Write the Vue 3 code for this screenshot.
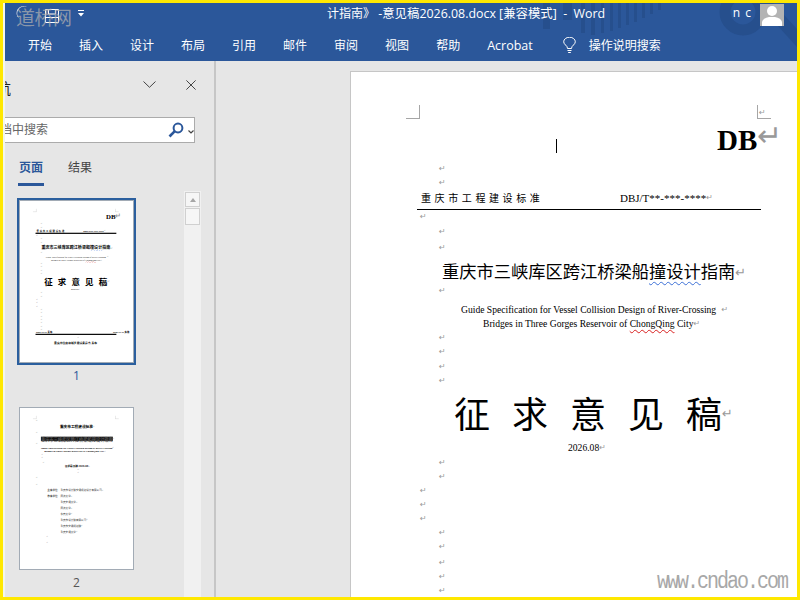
<script setup>
const tabs = ['开始', '插入', '设计', '布局', '引用', '邮件', '审阅', '视图', '帮助']

function layout(list, ox, oy) {
  let bottom = 0
  return list.map((r) => {
    const h = r.h || 14
    const top = r.y - oy - h / 2
    const row = {
      parts: r.p || [],
      mark: r.m === undefined ? true : r.m,
      style: { marginTop: top - bottom + 'px', marginLeft: r.x - ox + 'px', height: h + 'px' }
    }
    bottom = top + h
    return row
  })
}

const sp = (x, ys) => ys.map((y) => ({ x, y }))

const firstPage = layout(
  [
    { x: 717, y: 140, h: 28, p: [{ t: 'DB', c: 'db' }], m: 'big' },
    ...sp(439, [169, 183]),
    {
      x: 421,
      y: 198,
      p: [
        { t: '重庆市工程建设标准', c: 'std' },
        { t: 'DBJ/T**-***-****', c: 'code' }
      ]
    },
    { x: 417, y: 209, h: 2, p: [{ c: 'rule' }], m: false },
    { x: 420, y: 217 },
    ...sp(439, [232, 248]),
    {
      x: 442,
      y: 271,
      h: 22,
      p: [
        { t: '重庆市三峡库区跨江桥梁船', c: 'title' },
        { t: '撞设计', c: 'title blue' },
        { t: '指南', c: 'title' }
      ],
      m: 'mid'
    },
    { x: 439, y: 291 },
    { x: 461, y: 310, p: [{ t: 'Guide Specification for Vessel Collision Design of River-Crossing ', c: 'en gapr' }] },
    {
      x: 483,
      y: 324,
      p: [
        { t: 'Bridges in Three Gorges Reservoir of ', c: 'en' },
        { t: 'ChongQing', c: 'en red' },
        { t: ' City', c: 'en' }
      ]
    },
    ...sp(439, [338, 352, 367, 381]),
    {
      x: 454,
      y: 412,
      h: 44,
      p: [
        { t: '征求意见', c: 'big' },
        { t: '稿', c: 'big last' }
      ],
      m: 'mid'
    },
    { x: 568, y: 448, p: [{ t: '2026.08', c: 'en' }] },
    ...sp(439, [463, 477]),
    ...sp(420, [491, 505, 519]),
    ...sp(439, [533, 547, 563, 577, 591, 605, 619]),
    {
      x: 419,
      y: 632,
      p: [
        { t: '2026-**-** 发布', c: 'foot' },
        { t: '2026-**-** 实施', c: 'foot' }
      ],
      m: false
    },
    { x: 417, y: 639, h: 2, p: [{ c: 'rule' }], m: false },
    { x: 596, y: 653 },
    { x: 496, y: 675, p: [{ t: '重庆市住房和城乡建设委员会 发布', c: 'org' }], m: false }
  ],
  351,
  72
)

const secondPage = layout(
  [
    { x: 68, y: 55 },
    { x: 170, y: 77, h: 20, p: [{ t: '重庆市工程建设标准', c: 'h2' }] },
    { x: 68, y: 105 },
    { x: 89, y: 131, h: 22, p: [{ t: '重庆市三峡库区跨江桥梁船撞设计指南', c: 'h1' }] },
    { x: 68, y: 153 },
    { x: 89, y: 170, p: [{ t: 'Guide Specification for Vessel Collision Design of River-Crossing', c: 'en bold' }] },
    { x: 103, y: 184, p: [{ t: 'Bridges in Three Gorges Reservoir of ChongQing City', c: 'en bold' }] },
    { x: 91, y: 199 },
    { x: 91, y: 212 },
    { x: 97, y: 232 },
    { x: 191, y: 247, p: [{ t: '征求意见稿 2026.08', c: 'h3' }] },
    { x: 245, y: 262 },
    { x: 245, y: 275 },
    { x: 68, y: 296 },
    { x: 68, y: 325 },
    {
      x: 116,
      y: 350,
      p: [
        { t: '主编单位:', c: 'lab' },
        { t: '重庆市设计院交通规划设计有限公司', c: 'org2' }
      ]
    },
    {
      x: 116,
      y: 375,
      p: [
        { t: '参编单位:', c: 'lab' },
        { t: '同济大学', c: 'org2' }
      ]
    },
    { x: 172, y: 401, p: [{ t: '重庆交通大学', c: 'org2' }] },
    { x: 172, y: 426, p: [{ t: '同济大学', c: 'org2' }] },
    { x: 172, y: 451, p: [{ t: '东南大学', c: 'org2' }] },
    { x: 172, y: 476, p: [{ t: '重庆市设计院有限公司', c: 'org2' }] },
    { x: 172, y: 502, p: [{ t: '重庆市交通规划院', c: 'org2' }] },
    { x: 172, y: 527, p: [{ t: '重庆交通大学', c: 'org2' }] },
    { x: 113, y: 548 },
    { x: 113, y: 573 }
  ],
  0,
  0
)

const thumbs = [
  { n: '1', rows: firstPage, on: true },
  { n: '2', rows: secondPage, on: false }
]
</script>

<template>
  <div class="screen">
    <div class="strip"></div>
    <div class="window">
      <header class="ribbon">
        <svg class="decor" width="792" height="58" viewBox="0 0 792 58">
          <g fill="#264f8d">
            <rect x="538" y="0" width="7" height="26" />
            <rect x="558" y="0" width="9" height="17" />
            <rect x="576" y="0" width="4" height="30" />
            <rect x="586" y="0" width="4" height="32" />
            <rect x="596" y="0" width="3" height="30" />
            <rect x="605" y="0" width="3" height="28" />
            <rect x="613" y="0" width="3" height="25" />
            <rect x="621" y="0" width="3" height="22" />
            <rect x="629" y="0" width="3" height="19" />
            <rect x="637" y="0" width="3" height="15" />
            <rect x="645" y="0" width="3" height="11" />
            <rect x="653" y="0" width="3" height="7" />
          </g>
          <circle cx="738" cy="9" r="18" fill="none" stroke="#264f8d" stroke-width="11" />
          <path d="M752 0 L792 44 V26 L768 0 Z" fill="#264f8d" />
        </svg>
        <div class="titlebar">
          <svg class="save" width="14" height="14" viewBox="0 0 14 14">
            <path d="M.5.5H13.5V13.5H.5Z M3.5.5V5H10.5V.5 M.5 8.5H13.5" fill="none" stroke="#fff" />
          </svg>
          <svg class="qat" width="6" height="7" viewBox="0 0 6 7">
            <path d="M0 0H6V1H0Z M0 3H6L3 6.5Z" fill="#fff" />
          </svg>
          <div class="doc-title"><span class="zh">计指南》</span> -意见稿2026.08.docx [兼容模式]&nbsp; -&nbsp; Word</div>
          <div class="user">n c</div>
          <svg class="avatar" width="24" height="22" viewBox="0 0 24 22">
            <rect width="24" height="22" fill="#b3b3b3" />
            <circle cx="12" cy="7" r="5" fill="#fff" />
            <path d="M2 22V18Q3 14 9 13H15Q21 14 22 18V22Z" fill="#fff" />
          </svg>
        </div>
        <nav class="tabs">
          <span v-for="t in tabs" :key="t" class="tab">{{ t }}</span>
          <span class="tab latin">Acrobat</span>
          <span class="tell">
            <svg width="13" height="17" viewBox="0 0 13 17">
              <path d="M4.5 11.5Q4.5 9.5 2.5 8Q.7 6.3.7 4.8A5.8 4.6 0 0 1 12.3 4.8Q12.3 6.3 10.5 8Q8.5 9.5 8.5 11.5Z M4.5 13.5H8.5 M5.2 15.5H7.8" fill="none" stroke="#fff" />
            </svg>
            <span>操作说明搜索</span>
          </span>
        </nav>
        <div class="mark-wm">
          <svg width="14" height="16" viewBox="0 0 14 16">
            <path d="M11 1A7 7 0 0 0 4 13A6 6 0 0 1 11 1Z" fill="#d9dde6" />
          </svg>
          <span>道桥网</span>
        </div>
      </header>

      <main class="work">
        <aside class="nav">
          <div class="nav-head">
            <span class="nav-title">导航</span>
            <svg class="chev" width="13" height="7" viewBox="0 0 13 7">
              <path d="M.5.5L6.5 6.3L12.5.5" fill="none" stroke="#444" />
            </svg>
            <svg class="shut" width="10" height="10" viewBox="0 0 10 10">
              <path d="M.4.4L9.6 9.6M9.6.4L.4 9.6" fill="none" stroke="#444" />
            </svg>
          </div>
          <div class="search">
            <span class="hint">在文档中搜索</span>
            <svg width="16" height="16" viewBox="0 0 16 16">
              <circle cx="10" cy="6" r="4.4" fill="none" stroke="#2b579a" stroke-width="2" />
              <path d="M6.8 9.2L1.5 14.5" stroke="#2b579a" stroke-width="2.6" />
            </svg>
            <svg class="drop" width="6" height="4" viewBox="0 0 6 4">
              <path d="M.5.5L3 3L5.5.5" fill="none" stroke="#444" stroke-width="1.2" />
            </svg>
          </div>
          <div class="nav-tabs">
            <span class="nt active">页面</span>
            <span class="nt">结果</span>
          </div>
          <div class="nav-body">
            <div class="thumbs">
              <div v-for="p in thumbs" :key="p.n" class="thumb-item">
                <div :class="['thumb-frame', { on: p.on }]">
                  <div class="thumb">
                    <div class="sheet mini">
                      <i class="crop tl"></i>
                      <i class="crop tr"></i>
                      <div v-for="(r, i) in p.rows" :key="i" class="row" :style="r.style">
                        <span v-for="(q, k) in r.parts" :key="k" :class="q.c">{{ q.t }}</span>
                        <span v-if="r.mark" :class="['rt', r.mark]">↵</span>
                      </div>
                    </div>
                  </div>
                </div>
                <div :class="['num', { on: p.on }]">{{ p.n }}</div>
              </div>
            </div>
            <div class="scrollbar">
              <div class="sb-btn"><i></i></div>
              <div class="sb-thumb"></div>
            </div>
          </div>
        </aside>
        <section class="docarea">
          <div class="sheet">
            <i class="crop tl"></i>
            <i class="crop tr"><b class="rt tiny">↵</b></i>
            <i class="caret"></i>
            <div v-for="(r, i) in firstPage" :key="i" class="row" :style="r.style">
              <span v-for="(q, k) in r.parts" :key="k" :class="q.c">{{ q.t }}</span>
              <span v-if="r.mark" :class="['rt', r.mark]">↵</span>
            </div>
          </div>
          <div class="site">www.cndao.com</div>
        </section>
      </main>
    </div>
  </div>
</template>

<style>
html, body { margin: 0; padding: 0; background: #fff; }
</style>

<style scoped>
.screen {
  width: 800px;
  height: 600px;
  box-sizing: border-box;
  border: 3px solid #ffe800;
  display: flex;
  overflow: hidden;
  background: #fff;
  font-family: "Open Sans", "Noto Sans CJK SC", sans-serif;
}
.strip { width: 2px; flex: none; background: #f4f6ea; }
.window { flex: 1; min-width: 0; display: flex; flex-direction: column; }

.ribbon { position: relative; height: 58px; flex: none; background: #2b579a; color: #fff; overflow: hidden; }
.decor { position: absolute; left: 0; top: 0; }
.titlebar { position: relative; height: 26px; display: flex; align-items: center; }
.save { margin-left: 40px; margin-top: -1px; }
.qat { margin-left: 19px; margin-top: -5px; }
.doc-title { margin-left: 243px; flex: 1; font-size: 12.4px; white-space: nowrap; margin-top: -6px; }
.doc-title .zh { font-size: 12px; }
.user { font-size: 12px; letter-spacing: 1px; margin-right: 8px; margin-top: -7px; }
.avatar { margin-right: 13px; margin-top: -3px; }
.tabs { position: relative; height: 32px; display: flex; align-items: center; gap: 27px; padding-left: 23px; font-size: 12px; }
.tab { white-space: nowrap; }
.latin { font-size: 12.5px; }
.tell { display: flex; align-items: center; gap: 13px; margin-left: 3px; }
.mark-wm { position: absolute; left: 11px; top: 2px; display: flex; align-items: center; }
.mark-wm svg { position: absolute; left: 0; top: 1px; }
.mark-wm span { font-size: 19px; line-height: 26px; letter-spacing: -.5px; color: rgba(176, 176, 176, .72); }

.work { flex: 1; min-height: 0; display: flex; background: #e6e6e6; }
.nav { width: 209px; flex: none; display: flex; flex-direction: column; overflow: hidden; border-right: 2px solid #c6c6c6; box-sizing: content-box; color: #444; }
.nav-head { height: 56px; flex: none; display: flex; align-items: flex-start; }
.nav-title { margin: 17px 0 0 -24px; flex: none; width: 30px; font-size: 15px; line-height: 20px; color: #222; white-space: nowrap; direction: rtl; text-align: left; overflow: hidden; }
.chev { margin: 20px 0 0 132px; flex: none; }
.shut { margin: 19px 0 0 30px; flex: none; }
.search { flex: none; height: 26px; width: 224px; box-sizing: border-box; margin-left: -34px; border: 1px solid #ababab; background: #fff; display: flex; align-items: center; padding-left: 4px; }
.hint { font-size: 12px; color: #666; width: 192px; flex: none; white-space: nowrap; margin-top: -2px; }
.drop { margin-left: 4px; margin-top: 3px; }
.nav-tabs { flex: none; display: flex; gap: 23px; margin: 15px 0 0 13px; }
.nt { padding: 0 1px 5px; border-bottom: 3px solid transparent; font-size: 12px; line-height: 20px; color: #444; }
.nt.active { color: #2b579a; font-weight: 700; border-bottom-color: #2b579a; }
.nav-body { flex: 1; min-height: 0; margin-top: 5px; display: flex; }
.thumbs { width: 143px; margin-right: 36px; padding-top: 7px; display: flex; flex-direction: column; align-items: center; gap: 21px; flex: none; }
.thumb-item { display: flex; flex-direction: column; align-items: center; }
.thumb-frame { padding: 0; border: 2px solid transparent; }
.thumb-frame.on { border-color: #2b5f9e; }
.thumb { width: 113px; height: 161px; border: 1px solid #a2abb5; background: #fff; overflow: hidden; }
.num { margin-top: 3px; font-size: 12px; line-height: 16px; color: #555; }
.num.on { color: #2b579a; }
.scrollbar { width: 17px; flex: none; background: #f1f1f1; padding-top: 1px; display: flex; flex-direction: column; align-items: center; gap: 1px; }
.sb-btn, .sb-thumb { width: 15px; box-sizing: border-box; border: 1px solid #d0d0d0; background: #f6f6f6; }
.sb-btn { height: 15px; display: flex; align-items: center; justify-content: center; }
.sb-btn i { width: 0; height: 0; border: 3.5px solid transparent; border-top: 0; border-bottom: 4px solid #a6a6a6; }
.sb-thumb { height: 17px; }

.docarea { position: relative; flex: 1; min-width: 0; overflow: hidden; padding: 11px 0 0 135px; }
.sheet { position: relative; width: 481px; height: 680px; background: #fff; box-shadow: 0 0 0 1px #c6c6c6; font-family: "Liberation Serif", "Noto Sans CJK SC", serif; color: #000; display: flow-root; }
.sheet.mini { transform: scale(.235); transform-origin: 0 0; box-shadow: none; }
.row { display: flex; align-items: center; white-space: nowrap; line-height: 1; }
.rt { font-family: "DejaVu Sans", sans-serif; font-size: 8px; color: #999; line-height: 1; font-weight: 400; }
.rt.big { font-size: 30px; margin-top: -14px; }
.rt.mid { font-size: 13px; margin-top: 3px; }
.rt.tiny { position: absolute; left: 1px; top: 4px; }
.db { font-size: 29px; font-weight: 700; }
.en { font-size: 9.6px; white-space: pre; }
.code { font-size: 11px; }
.gapr { margin-right: 3px; }
.bold { font-weight: 700; font-size: 11px; }
.std { font-family: "Noto Sans CJK SC", sans-serif; font-size: 10px; letter-spacing: 3.6px; width: 199px; }
.rule { display: block; width: 344px; height: 1px; background: #000; }
.title { font-family: "Noto Sans CJK SC", sans-serif; font-size: 17.25px; }
.blue { text-decoration: underline wavy #3b6fd6 1px; text-underline-offset: 3px; }
.red { text-decoration: underline wavy #d82020 1px; text-underline-offset: 2px; }
.big { font-family: "Noto Sans CJK SC", sans-serif; font-size: 36px; letter-spacing: 22px; }
.big.last { letter-spacing: 0; }
.foot { font-size: 10px; font-weight: 700; width: 328px; flex: none; }
.foot + .foot { width: 90px; }
.org { font-family: "Noto Sans CJK SC", sans-serif; font-size: 12px; font-weight: 700; }
.h1 { font-family: "Noto Sans CJK SC", sans-serif; font-size: 18px; font-weight: 700; background: #111; color: #555; }
.h2 { font-family: "Noto Sans CJK SC", sans-serif; font-size: 15.6px; font-weight: 700; }
.h3 { font-family: "Noto Sans CJK SC", sans-serif; font-size: 11px; font-weight: 700; }
.lab { font-family: "Noto Sans CJK SC", sans-serif; font-size: 11px; width: 56px; flex: none; }
.org2 { font-family: "Noto Sans CJK SC", sans-serif; font-size: 11px; color: #333; }
.mini .title, .mini .big, .mini .std, .mini .code { font-weight: 700; }
.mini .rule { height: 5px; }
.crop { position: absolute; top: 33px; width: 13px; height: 13px; border-bottom: 1px solid #a6a6a6; }
.crop.tl { left: 55px; border-right: 1px solid #a6a6a6; }
.crop.tr { left: 406px; border-left: 1px solid #a6a6a6; }
.caret { position: absolute; left: 205px; top: 67px; width: 1px; height: 14px; background: #000; }
.site { position: absolute; right: 10px; bottom: 3px; font-family: "Liberation Mono", monospace; font-size: 20px; letter-spacing: -2px; line-height: 24px; color: #a8a8a8; transform: scaleY(1.15); }
</style>
